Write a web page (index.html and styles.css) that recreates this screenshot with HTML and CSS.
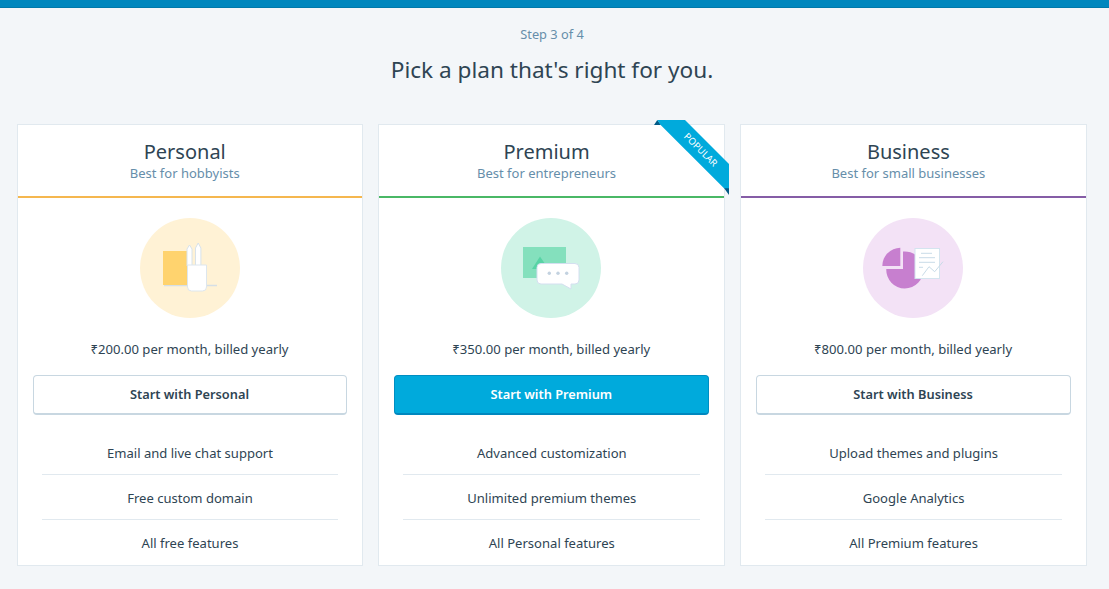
FILE: index.html
```html
<!DOCTYPE html>
<html lang="en">
<head>
<meta charset="utf-8">
<title>Pick a plan</title>
<link rel="stylesheet" href="styles.css">
</head>
<body>
<div class="topbar"></div>
<header class="intro">
  <p class="step">Step 3 of 4</p>
  <h1 class="title">Pick a plan that's right for you.</h1>
</header>
<main class="plans">
  <section class="plan">
    <div class="plan-head head-personal">
      <h2 class="plan-name">Personal</h2>
      <p class="plan-tag">Best for hobbyists</p>
    </div>
    <div class="plan-body">
      <div class="disc disc-personal">
        <svg class="art" viewBox="0 0 100 100" width="100" height="100">
          <path d="M24 67.500H77" stroke="#d5dfe6" stroke-width="1.500"/>
          <rect x="23" y="33" width="25" height="34" fill="#ffd36e"/>
          <path d="M47 48V31l2.500-4 2.500 4v17zM55.500 48V30l2.700-5 2.700 5v18z" fill="#fff" stroke="#d8e2ea" stroke-width="1"/>
          <path d="M47.500 47h19v22a4 4 0 0 1-4 4h-11a4 4 0 0 1-4-4z" fill="#fff" stroke="#dde6ed" stroke-width="1"/>
        </svg>
      </div>
      <p class="price">₹200.00 per month, billed yearly</p>
      <button class="cta" type="button">Start with Personal</button>
      <ul class="features">
        <li>Email and live chat support</li>
        <li>Free custom domain</li>
        <li>All free features</li>
      </ul>
    </div>
  </section>
  <section class="plan">
    <div class="ribbon">
      <svg class="ribbon-art" viewBox="0 0 75 75" width="75" height="75">
        <path d="M0 5L3.300 0L7 5z" fill="#005a87"/>
        <path d="M70 68H75V75z" fill="#005a87"/>
        <path d="M3.300 0L6.700 5L70 68.300H75V44L31 0z" fill="#00aadc"/>
      </svg>
      <span class="ribbon-text">POPULAR</span>
    </div>
    <div class="plan-head head-premium">
      <h2 class="plan-name">Premium</h2>
      <p class="plan-tag">Best for entrepreneurs</p>
    </div>
    <div class="plan-body">
      <div class="disc disc-premium">
        <svg class="art" viewBox="0 0 100 100" width="100" height="100">
          <rect x="22" y="29" width="43" height="31" fill="#84e0bd"/>
          <path d="M31 51l8-12.500 8.500 12.500z" fill="#58d3a5"/>
          <path d="M40 45.500h34a4 4 0 0 1 4 4v12.500a4 4 0 0 1-4 4h-4v5l-9-5H40a4 4 0 0 1-4-4V49.500a4 4 0 0 1 4-4z" fill="#fff" stroke="#d4dff0" stroke-width="1"/>
          <circle cx="48.300" cy="55.300" r="1.700" fill="#c3d2e0"/>
          <circle cx="57" cy="55.300" r="1.700" fill="#c3d2e0"/>
          <circle cx="65.700" cy="55.300" r="1.700" fill="#c3d2e0"/>
        </svg>
      </div>
      <p class="price">₹350.00 per month, billed yearly</p>
      <button class="cta cta-primary" type="button">Start with Premium</button>
      <ul class="features">
        <li>Advanced customization</li>
        <li>Unlimited premium themes</li>
        <li>All Personal features</li>
      </ul>
    </div>
  </section>
  <section class="plan">
    <div class="plan-head head-business">
      <h2 class="plan-name">Business</h2>
      <p class="plan-tag">Best for small businesses</p>
    </div>
    <div class="plan-body">
      <div class="disc disc-business">
        <svg class="art" viewBox="0 0 100 100" width="100" height="100">
          <path d="M37.300 29.700V48H19.300A18.300 18.300 0 0 1 37.300 29.700z" fill="#c77fcf"/>
          <path d="M40 33.500A18.500 18.500 0 1 1 23.300 51H40z" fill="#c77fcf"/>
          <rect x="52" y="30.500" width="24.500" height="30" fill="#fff" stroke="#d4e4ef" stroke-width="1"/>
          <path d="M58 35.300h11M56 39.700h16M56 44.300h16M56 49.300h4" stroke="#c8dbe8" stroke-width="1" fill="none"/>
          <path d="M59.300 57.700L66 48.700l5.700 5L80 43.700" stroke="#c8dbe8" stroke-width="1" fill="none"/>
        </svg>
      </div>
      <p class="price">₹800.00 per month, billed yearly</p>
      <button class="cta" type="button">Start with Business</button>
      <ul class="features">
        <li>Upload themes and plugins</li>
        <li>Google Analytics</li>
        <li>All Premium features</li>
      </ul>
    </div>
  </section>
</main>
</body>
</html>
```

FILE: styles.css
```css
* { box-sizing: border-box; }
html, body { margin: 0; padding: 0; }
body {
  background: #f3f6f9;
  color: #2e4453;
  font-family: "Noto Sans", "Open Sans", sans-serif;
  height: 589px;
  overflow: hidden;
}
.topbar {
  height: 8px;
  background: #0087be;
  border-bottom: 1px solid #0079aa;
}
.intro { text-align: center; height: 116px; padding: 18px 5px 0 0; }
.step {
  margin: 0;
  font-size: 12.800px;
  line-height: 17px;
  color: #668eaa;
}
.title {
  margin: 11px 0 0;
  font-size: 22.600px;
  line-height: 32px;
  font-weight: 400;
  color: #2e4453;
}
.plans {
  display: grid;
  grid-template-columns: repeat(3, 1fr);
  gap: 15px;
  padding: 0 22px 0 16.600px;
}
.plan {
  position: relative;
  background: #fff;
  border: 1px solid #e1e9ef;
  height: 442px;
}
.plan-head {
  height: 73px;
  padding: 13px 10.500px 0 0;
  text-align: center;
  border-bottom: 2px solid;
}
.head-personal { border-color: #f5b74f; }
.head-premium { border-color: #4ab866; }
.head-business { border-color: #855da6; }
.plan-name {
  margin: 0;
  font-size: 20px;
  line-height: 27px;
  font-weight: 400;
  color: #2e4453;
}
.plan-tag {
  margin: 0;
  font-size: 13px;
  line-height: 17px;
  color: #668eaa;
}
.plan-body { padding: 20px 15px 0; text-align: center; }
.disc {
  width: 100px;
  height: 100px;
  border-radius: 50%;
  margin: 0 0 0 calc(50% - 50.600px);
}
.disc-personal { background: #fff2d5; margin-left: calc(50% - 50px); }
.disc-premium { background: #d0f3e7; }
.disc-business { background: #f3e2f6; }
.art { display: block; overflow: visible; }
.price {
  margin: 21px 0 0;
  padding-right: 1px;
  font-size: 13.100px;
  line-height: 20px;
  color: #2e4453;
}
.cta {
  display: block;
  width: 100%;
  height: 40px;
  margin-top: 16px;
  background: #fff;
  border: 1px solid #c8d7e1;
  border-bottom-width: 2px;
  border-radius: 4px;
  font-family: inherit;
  font-size: 12.800px;
  font-weight: 600;
  color: #2e4453;
  padding: 0 1px 2px 0;
}
.cta-primary {
  background: #00aadc;
  border-color: #008ec2;
  border-bottom-color: #0087be;
  color: #fff;
}
.features { list-style: none; margin: 16px 9px 0; padding: 0; }
.features li {
  height: 45px;
  line-height: 46px;
  font-size: 13.050px;
  color: #2e4453;
  border-top: 1px solid #e1e9ef;
}
.features li:first-child { border-top: 0; height: 43px; line-height: 44px; }
.ribbon {
  position: absolute;
  top: -5px;
  right: -5px;
  width: 75px;
  height: 75px;
  z-index: 2;
}
.ribbon-art { display: block; }
.ribbon-text {
  position: absolute;
  top: 25px;
  left: 25px;
  font-size: 9.500px;
  line-height: 10px;
  color: #fff;
  transform: rotate(45deg);
}
```
